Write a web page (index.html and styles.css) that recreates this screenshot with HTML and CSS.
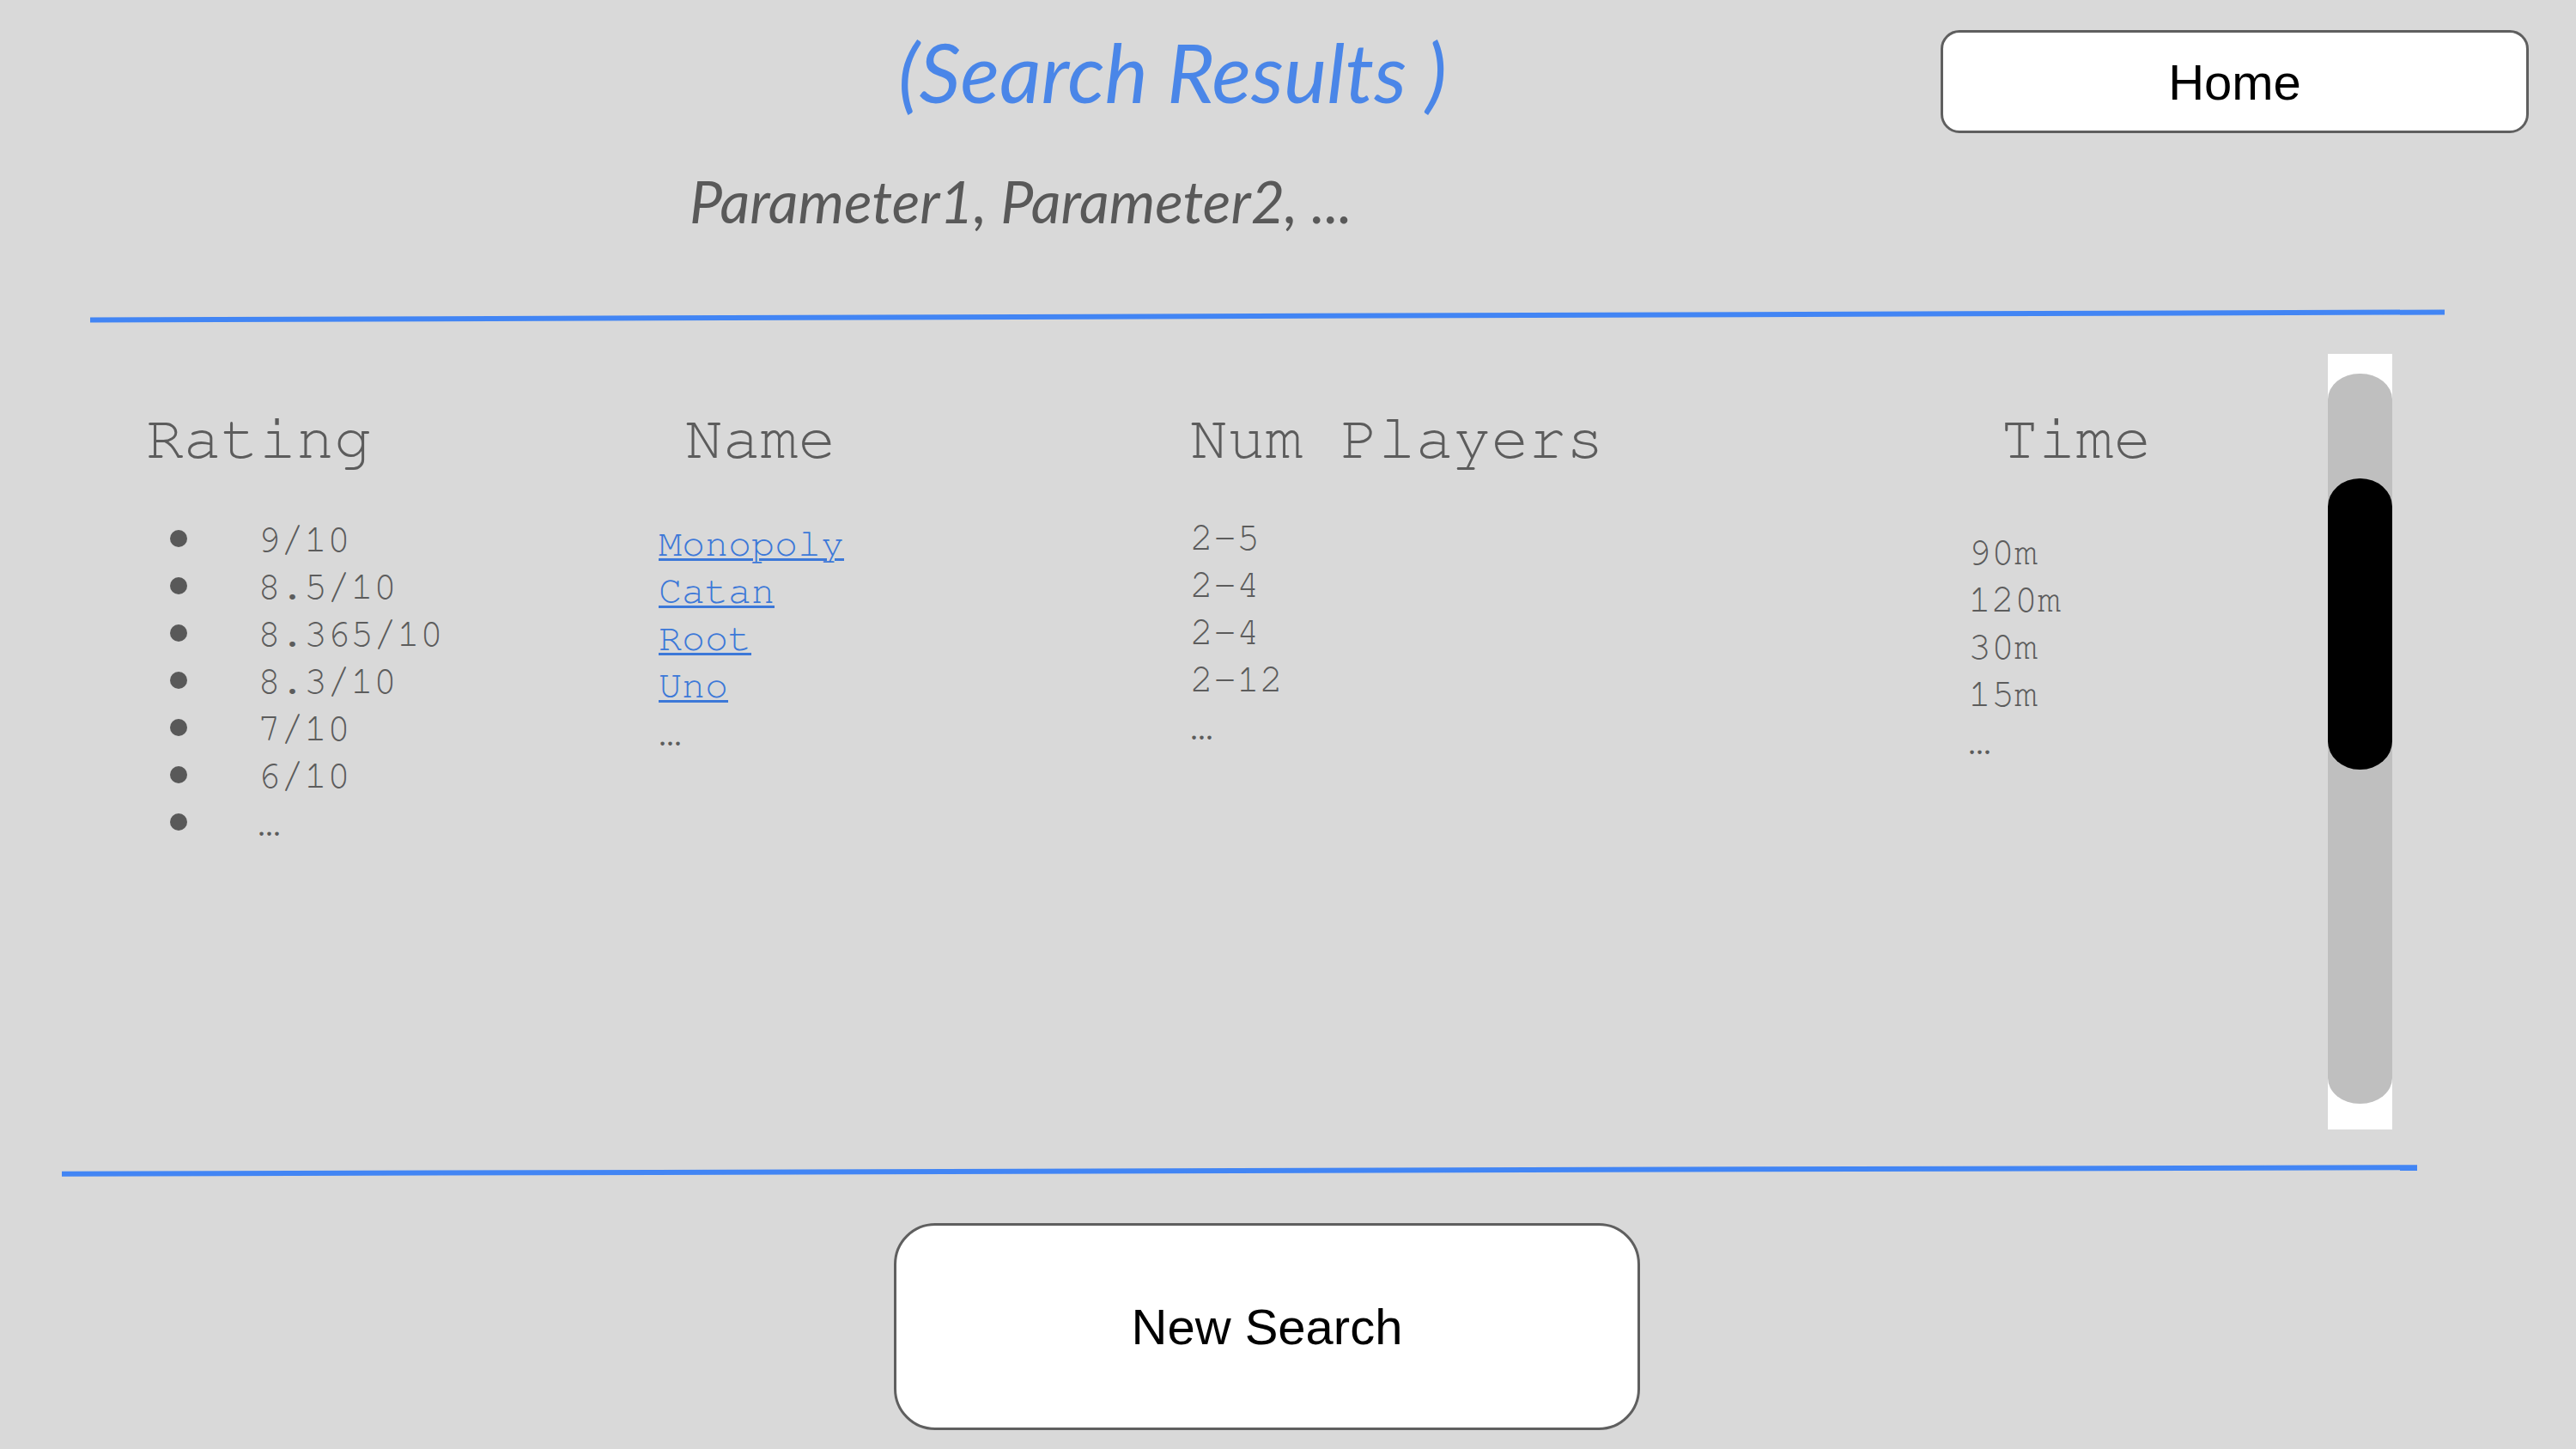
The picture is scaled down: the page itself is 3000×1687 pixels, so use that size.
FILE: index.html
```html
<!DOCTYPE html>
<html lang="en">
<head>
<meta charset="utf-8">
<title>Search Results</title>
<link rel="stylesheet" href="styles.css">
</head>
<body>
<div class="page">
  <header class="top">
    <div class="heading">
      <h1 class="title">(Search Results )</h1>
      <p class="params">Parameter1, Parameter2, ...</p>
    </div>
    <button class="btn btn-home">Home</button>
  </header>

  <div class="rule rule-top"></div>

  <section class="results">
    <div class="col col-rating">
      <h2 class="col-head">Rating</h2>
      <ul class="list rating-list">
        <li>9/10</li>
        <li>8.5/10</li>
        <li>8.365/10</li>
        <li>8.3/10</li>
        <li>7/10</li>
        <li>6/10</li>
        <li>…</li>
      </ul>
    </div>
    <div class="col col-name">
      <h2 class="col-head head-name">Name</h2>
      <ul class="list name-list">
        <li><a class="game-link" href="#">Monopoly</a></li>
        <li><a class="game-link" href="#">Catan</a></li>
        <li><a class="game-link" href="#">Root</a></li>
        <li><a class="game-link" href="#">Uno</a></li>
        <li>…</li>
      </ul>
    </div>
    <div class="col col-players">
      <h2 class="col-head">Num Players</h2>
      <ul class="list players-list">
        <li>2-5</li>
        <li>2-4</li>
        <li>2-4</li>
        <li>2-12</li>
        <li>…</li>
      </ul>
    </div>
    <div class="col col-time">
      <h2 class="col-head head-time">Time</h2>
      <ul class="list time-list">
        <li>90m</li>
        <li>120m</li>
        <li>30m</li>
        <li>15m</li>
        <li>…</li>
      </ul>
    </div>
    <div class="scrollbar">
      <div class="track">
        <div class="thumb"></div>
      </div>
    </div>
  </section>

  <div class="rule rule-bottom"></div>

  <button class="btn btn-new">New Search</button>
</div>
</body>
</html>
```

FILE: styles.css
```css
html, body {
  margin: 0;
  padding: 0;
}

body {
  background: #d9d9d9;
  width: 3000px;
  height: 1687px;
  overflow: hidden;
}

.page {
  width: 3000px;
  height: 1687px;
  display: flex;
  flex-direction: column;
  align-items: flex-start;
}

/* ---------- header ---------- */
.top {
  display: flex;
  align-items: flex-start;
  width: 100%;
}

.heading {
  display: flex;
  flex-direction: column;
  align-items: flex-start;
}

.title {
  margin: 27px 0 0 1046px;
  font-family: "Lato", "Open Sans", sans-serif;
  font-style: italic;
  font-weight: 400;
  font-size: 95px;
  line-height: 113px;
  color: #4a86e8;
  white-space: nowrap;
}

.params {
  margin: 54px 0 0 803px;
  font-family: "Lato", "Open Sans", sans-serif;
  font-style: italic;
  font-weight: 400;
  font-size: 68px;
  line-height: 80px;
  color: #595959;
  white-space: nowrap;
}

.btn {
  box-sizing: border-box;
  display: flex;
  align-items: center;
  justify-content: center;
  background: #ffffff;
  border: 3px solid #5f5f5f;
  color: #000000;
  font-family: "Liberation Sans", Arial, sans-serif;
  font-size: 58px;
  padding: 0;
  cursor: pointer;
}

.btn-home {
  margin: 35px 55px 0 auto;
  width: 685px;
  height: 120px;
  border-radius: 22px;
}

.btn-new {
  margin: 58px 0 0 1041px;
  width: 869px;
  height: 241px;
  border-radius: 48px;
}

/* ---------- rules ---------- */
.rule {
  height: 6px;
  background: #4285f4;
  flex: none;
}

.rule-top {
  margin: 91px 0 0 105px;
  width: 2742px;
  transform: rotate(-0.19deg);
}

.rule-bottom {
  margin: 45px 0 0 72px;
  width: 2743px;
  transform: rotate(-0.16deg);
}

/* ---------- results ---------- */
.results {
  display: grid;
  grid-template-columns: 597px 619px 906px 419px 75px;
  padding-left: 170px;
  font-family: "Nimbus Mono PS", "Nimbus Mono L", "FreeMono", "Courier New", "Liberation Mono", monospace;
  color: #5c5c5c;
}

.col {
  padding-top: 101px;
}

.col-head {
  margin: 0;
  font-size: 73px;
  font-weight: 400;
  line-height: 80px;
  white-space: nowrap;
}

.head-name {
  padding-left: 31px;
}

.head-time {
  padding-left: 38px;
}

.list {
  list-style: none;
  margin: 0;
  padding: 0;
  font-size: 45px;
  line-height: 55px;
  white-space: nowrap;
}

.rating-list {
  margin-top: 49px;
}

.rating-list li {
  display: flex;
  align-items: center;
}

.rating-list li::before {
  content: "";
  flex: none;
  width: 20px;
  height: 20px;
  border-radius: 50%;
  background: #595959;
  margin: 0 82px 3px 28px;
}

.name-list {
  margin-top: 54px;
}

.players-list {
  margin-top: 47px;
}

.time-list {
  margin-top: 64px;
}

.game-link {
  color: #3c78d8;
  text-decoration: underline;
  text-decoration-thickness: 3px;
  text-underline-offset: 3px;
}

/* ---------- scrollbar ---------- */
.scrollbar {
  align-self: start;
  margin-top: 41px;
  width: 75px;
  height: 903px;
  background: #ffffff;
  padding-top: 23px;
  box-sizing: border-box;
}

.track {
  width: 75px;
  height: 850px;
  background: #bfbfbf;
  border-radius: 37px / 30px;
  padding-top: 122px;
  box-sizing: border-box;
}

.thumb {
  width: 75px;
  height: 339px;
  background: #000000;
  border-radius: 37px / 33px;
}
```
